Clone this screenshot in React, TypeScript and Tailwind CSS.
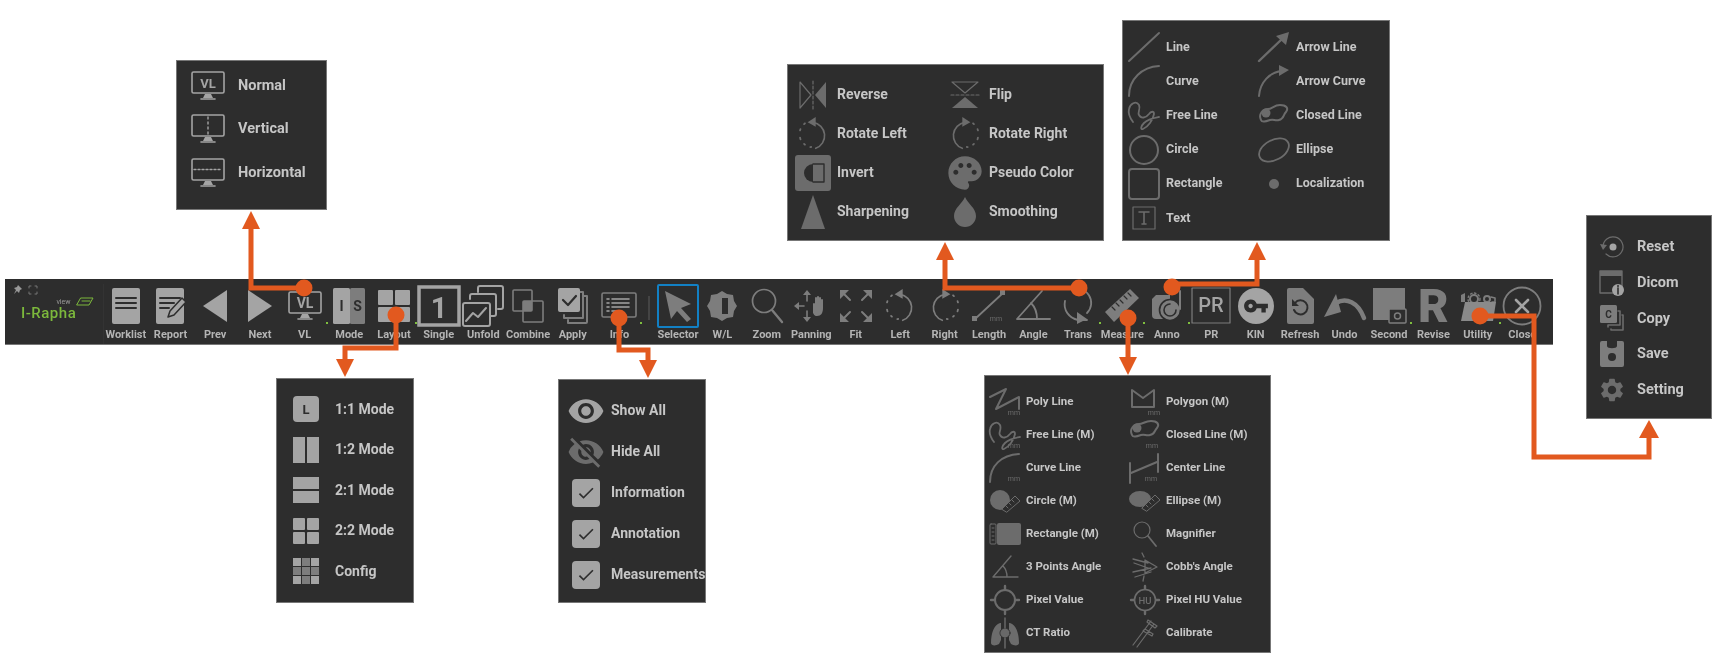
import React from 'react';
import { MdVisibility, MdVisibilityOff, MdPalette, MdSettings, MdVpnKey, MdCheck } from 'react-icons/md';

const L = '#a4a4a4';
const M = '#7d7d7d';
const D = '#6c6c6c';
const BG = '#2d2d2d';
const FONT = 'Roboto, sans-serif';

const Svg: React.FC<{ w: number; h: number; children: React.ReactNode }> = ({ w, h, children }) => (
  <svg width={w} height={h} viewBox={`0 0 ${w} ${h}`} fill="none" strokeLinecap="round" strokeLinejoin="round" className="overflow-visible">
    {children}
  </svg>
);

const Label: React.FC<{ x: number; y: number; s: number; c: string; w?: number; children: React.ReactNode }> = ({ x, y, s, c, w = 700, children }) => (
  <text x={x} y={y} fontSize={s} fill={c} fontWeight={w} fontFamily={FONT} textAnchor="middle">{children}</text>
);

const Mm: React.FC<{ x: number; y: number }> = ({ x, y }) => <Label x={x} y={y - 2} s={7} c={D} w={400}>mm</Label>;

/* ---- toolbar icons ---- */
const Pin = () => (
  <Svg w={10} h={10}><path d="M5 0l4 4-2 1-1 3-2-2-3 3 2-4-2-2 3-1z" fill="#999" /></Svg>
);
const Corners = () => (
  <Svg w={10} h={10}><path d="M1 3V1h2M7 1h2v2M9 7v2H7M3 9H1V7" stroke="#777" strokeWidth={1} /></Svg>
);
const Worklist = () => (
  <Svg w={30} h={36}>
    <rect x={1} y={0} width={28} height={36} rx={2} fill={L} />
    <path d="M5 10h20M5 15h20M5 20h20" stroke={BG} strokeWidth={2} />
  </Svg>
);
const Report = () => (
  <Svg w={32} h={36}>
    <rect x={1} y={0} width={28} height={36} rx={2} fill={L} />
    <path d="M5 10h20M5 15h14M5 20h9" stroke={BG} strokeWidth={2} />
    <path d="M13 29l2-6 12-13 4 4-12 13z" fill={L} stroke={BG} strokeWidth={1.5} />
  </Svg>
);
const Prev = () => <Svg w={24} h={32}><path d="M24 0v32L0 16z" fill={L} /></Svg>;
const Next = () => <Svg w={24} h={32}><path d="M0 0v32l24-16z" fill={L} /></Svg>;
const Monitor: React.FC<{ children?: React.ReactNode; c?: string }> = ({ children, c = L }) => (
  <Svg w={34} h={30}>
    <rect x={1} y={1} width={32} height={21} rx={1.5} stroke={c} strokeWidth={1.6} />
    <path d="M12 27l2-4h6l2 4z" fill={c} />
    <path d="M10 28h14" stroke={c} strokeWidth={1.6} />
    {children}
  </Svg>
);
const VL = () => <Monitor><Label x={17} y={17} s={14} c={L}>VL</Label></Monitor>;
const Mode = () => (
  <Svg w={32} h={36}>
    <rect x={0} y={0} width={17} height={36} rx={1.5} fill={L} />
    <rect x={17} y={0} width={15} height={36} rx={1.5} fill={M} />
    <Label x={8.5} y={23} s={14} c={BG}>I</Label>
    <Label x={24.5} y={23} s={14} c={BG}>S</Label>
  </Svg>
);
const Quad: React.FC<{ s: number }> = ({ s }) => {
  const h = (s - 2) / 2;
  return (
    <Svg w={s} h={s}>
      <rect x={0} y={0} width={h} height={h} rx={1} fill={L} />
      <rect x={h + 2} y={0} width={h} height={h} rx={1} fill={L} />
      <rect x={0} y={h + 2} width={h} height={h} rx={1} fill={L} />
      <rect x={h + 2} y={h + 2} width={h} height={h} rx={1} fill={L} />
    </Svg>
  );
};
const Single = () => (
  <Svg w={44} h={42}>
    <rect x={2} y={2} width={40} height={38} stroke={L} strokeWidth={3.5} strokeLinejoin="miter" />
    <Label x={22} y={33} s={29} c={L}>1</Label>
  </Svg>
);
const Unfold = () => (
  <Svg w={42} h={42}>
    <path d="M16 7V3a2 2 0 012-2h21a2 2 0 012 2v19a2 2 0 01-2 2h-3" stroke={L} strokeWidth={2} />
    <path d="M8 14v-3a2 2 0 012-2h22a2 2 0 012 2v18a2 2 0 01-2 2h-3" stroke={L} strokeWidth={2} />
    <rect x={1} y={18} width={27} height={23} rx={2} fill={BG} stroke={L} strokeWidth={2} />
    <path d="M4 36l7-8 5 4 8-9" stroke={L} strokeWidth={2} />
  </Svg>
);
const Combine = () => (
  <Svg w={32} h={34}>
    <rect x={1} y={1} width={19} height={21} rx={1} stroke={M} strokeWidth={1.6} />
    <rect x={11} y={12} width={20} height={21} rx={1} stroke={M} strokeWidth={1.6} />
    <rect x={11} y={12} width={9} height={10} fill={M} />
  </Svg>
);
const Apply = () => (
  <Svg w={30} h={36}>
    <path d="M26 8h3v26a1 1 0 01-1 1H10v-3" stroke={M} strokeWidth={2} />
    <path d="M22 4h3v26H6v-3" stroke={M} strokeWidth={2} />
    <rect x={0} y={0} width={22} height={24} rx={2} fill={L} />
    <path d="M5 12l5 5 8-9" stroke={BG} strokeWidth={2.2} />
  </Svg>
);
const Info = () => (
  <Svg w={36} h={28}>
    <rect x={1} y={1} width={34} height={24} rx={1.5} stroke={M} strokeWidth={1.6} />
    <path d="M6 7h2M6 11h2M6 15h2M6 19h2M11 7h17M11 11h17M11 15h17M11 19h8" stroke={L} strokeWidth={1.6} />
  </Svg>
);
const Selector = () => (
  <Svg w={30} h={32}><path d="M2 1l26 13-10 4 10 11-4 3-10-11-6 8z" fill={M} /></Svg>
);
const WL = () => (
  <Svg w={32} h={32}>
    <path d="M16 1l5 3 6 1 1 6 3 5-3 5-1 6-6 1-5 3-5-3-6-1-1-6-3-5 3-5 1-6 6-1z" fill={M} />
    <path d="M16 8h6v16h-6z" fill={BG} />
  </Svg>
);
const Zoom = () => (
  <Svg w={32} h={36}>
    <circle cx={13} cy={13} r={11.5} stroke={M} strokeWidth={1.7} />
    <path d="M21 22l10 12" stroke={M} strokeWidth={2.4} />
  </Svg>
);
const Panning = () => (
  <Svg w={36} h={34}>
    <path d="M14 1l4 5h-8zM14 33l-4-5h8zM1 17l5-4v8z" fill={M} />
    <path d="M14 6v6M14 22v6M6 17h5" stroke={M} strokeWidth={1.6} />
    <path d="M20 24v-9a1 1 0 012 0v-6a1 1 0 012 0v-1a1 1 0 012 0v1a1 1 0 012 0v2a1 1 0 012 0v8c0 5-2 8-6 8-3 0-3-2-4-3z" fill={M} />
  </Svg>
);
const Fit = () => (
  <Svg w={34} h={34}>
    <path d="M1 1h9L1 10zM33 1v9L24 1zM1 33v-9l9 9zM33 33h-9l9-9z" fill={M} />
    <path d="M5 5l6 6M29 5l-6 6M5 29l6-6M29 29l-6-6" stroke={M} strokeWidth={2} />
  </Svg>
);
const RotL: React.FC<{ c?: string; s?: number }> = ({ c = M, s = 34 }) => (
  <svg width={s} height={s} viewBox="0 0 34 38" fill="none" strokeLinecap="round">
    <path d="M17 6a15 15 0 0 1 3 29" stroke={c} strokeWidth={1.8} />
    <path d="M15 33.5l-1 .1M8 31l-1-1M3 25l-.5-2M2.500 15l.5-1.500M7 8l1-1" stroke={c} strokeWidth={2} />
    <path d="M20 0v11l-9-5z" fill={c} />
  </svg>
);
const RotR: React.FC<{ c?: string; s?: number }> = ({ c = M, s = 34 }) => (
  <div className="-scale-x-100"><RotL c={c} s={s} /></div>
);
const Length = () => (
  <Svg w={36} h={34}>
    <path d="M4 30L32 4" stroke={M} strokeWidth={1.8} />
    <rect x={1} y={27} width={5} height={5} fill={M} />
    <rect x={29} y={1} width={5} height={5} fill={M} />
    <Label x={25} y={32} s={7} c={D} w={400}>mm</Label>
  </Svg>
);
const Angle = () => (
  <Svg w={36} h={32}>
    <path d="M27 1L2 29h33M16 13c4 4 6 9 6 16" stroke={M} strokeWidth={1.8} />
  </Svg>
);
const Trans = () => (
  <Svg w={30} h={36}>
    <path d="M9 2a14 14 0 0115 23M24 32H15C6 30 0 22 2 13" stroke={M} strokeWidth={1.8} />
    <path d="M14 24v12l10-5z" fill={M} />
  </Svg>
);
const Ruler = () => (
  <Svg w={36} h={36}>
    <path d="M1 24L26 1l9 9-25 24z" fill={M} />
    <path d="M8 19l3 3M12 15l3 3M16 12l3 3M20 8l3 3M24 5l3 3" stroke={BG} strokeWidth={1.2} />
  </Svg>
);
const Anno = () => (
  <Svg w={32} h={32}>
    <path d="M1 9l4-4h14v24H5a4 4 0 01-4-4z" fill={M} />
    <circle cx={19} cy={20} r={10.500} fill={M} stroke={BG} strokeWidth={1.6} />
    <path d="M19 14a6 6 0 106 6" stroke={BG} strokeWidth={1.6} />
    <path d="M29 19V1" stroke={M} strokeWidth={2} />
  </Svg>
);
const PR = () => (
  <Svg w={40} h={36}>
    <rect x={1} y={0} width={38} height={35} stroke={M} strokeWidth={1.2} />
    <Label x={20} y={24} s={20} c={L} w={500}>PR</Label>
  </Svg>
);
const Kin = () => (
  <div className="relative flex h-[36px] w-[36px] items-center justify-center rounded-full bg-[#a4a4a4]">
    <MdVpnKey size={26} color={BG} />
  </div>
);
const Refresh = () => (
  <Svg w={28} h={36}>
    <path d="M1 2a2 2 0 012-2h14l11 11v23a2 2 0 01-2 2H3a2 2 0 01-2-2z" fill={M} />
    <path d="M9 15a7 7 0 11-1 7" stroke={BG} strokeWidth={2} />
    <path d="M6 11v7h7z" fill={BG} />
  </Svg>
);
const Undo = () => (
  <Svg w={42} h={28}>
    <path d="M40 26C34 10 22 5 12 11" stroke={M} strokeWidth={4.5} />
    <path d="M12 2l5 18L0 25z" fill={M} />
  </Svg>
);
const Second = () => (
  <Svg w={34} h={36}>
    <rect x={1} y={0} width={32} height={32} fill={M} />
    <rect x={17} y={21} width={17} height={14} rx={1} fill={BG} stroke={M} strokeWidth={1.5} />
    <circle cx={25.500} cy={28} r={3} stroke={M} strokeWidth={1.5} />
  </Svg>
);
const Revise = () => (
  <div className="h-[36px] text-[47px] font-black leading-[36px] text-[#7d7d7d]">R</div>
);
const Utility = () => (
  <Svg w={36} h={30}>
    <path d="M1 4l4-2v9H1z" fill={M} />
    <circle cx={14} cy={8} r={4} stroke={M} strokeWidth={2} />
    <circle cx={14} cy={8} r={6} stroke={M} strokeWidth={1.4} strokeDasharray="1.500 2.500" />
    <circle cx={27} cy={8} r={3} stroke={M} strokeWidth={2} />
    <path d="M31 6l4 1v4h-3" stroke={M} strokeWidth={1.6} />
    <path d="M5 11h31l-3 19H1z" fill="#8a8a8a" />
  </Svg>
);
const Close = () => (
  <Svg w={40} h={40}>
    <circle cx={20} cy={20} r={18.500} stroke={M} strokeWidth={1.8} />
    <path d="M14 14l12 12M26 14L14 26" stroke={L} strokeWidth={2.6} />
  </Svg>
);

/* ---- menu icons ---- */
const VLNormal = () => <Monitor><Label x={17} y={17} s={13} c={L}>VL</Label></Monitor>;
const VLVertical = () => <Monitor><path d="M17 3v17" stroke={L} strokeWidth={1.4} strokeDasharray="2 3" /></Monitor>;
const VLHorizontal = () => <Monitor><path d="M3 11.500h28" stroke={L} strokeWidth={1.4} strokeDasharray="2 2" /></Monitor>;

const LayoutL = () => (
  <div className="flex h-[26px] w-[26px] items-center justify-center rounded-sm bg-[#a4a4a4] text-[13px] font-bold text-[#2d2d2d]">L</div>
);
const Layout12 = () => (
  <Svg w={26} h={26}><rect width={12} height={26} fill={L} /><rect x={14} width={12} height={26} fill={L} /></Svg>
);
const Layout21 = () => (
  <Svg w={26} h={26}><rect width={26} height={12} fill={L} /><rect y={14} width={26} height={12} fill={L} /></Svg>
);
const LayoutCfg = () => (
  <Svg w={26} h={26}>
    {[0, 9, 18].map(x => [0, 9, 18].map(y => <rect key={`${x}-${y}`} x={x} y={y} width={8} height={8} fill={x === 9 || y === 9 ? M : L} />))}
  </Svg>
);
const Check = () => (
  <div className="flex h-[28px] w-[28px] items-center justify-center rounded-sm bg-[#a4a4a4]">
    <MdCheck size={20} color={BG} />
  </div>
);

const Reverse = () => (
  <Svg w={28} h={28}>
    <path d="M1 1l11 13L1 27z" stroke={D} strokeWidth={1.2} />
    <path d="M27 1L16 14l11 13z" fill={D} />
    <path d="M14 0v28" stroke={D} strokeWidth={1.2} strokeDasharray="3 2" />
  </Svg>
);
const Flip = () => (
  <div className="rotate-90"><Reverse /></div>
);
const Invert = () => (
  <Svg w={36} h={36}>
    <rect x={0} y={0} width={36} height={36} rx={3} fill={D} />
    <path d="M18 9a9 9 0 000 18z" fill={BG} />
    <path d="M18 9h11v18H18" stroke={BG} strokeWidth={1.4} />
  </Svg>
);
const Sharpen = () => <Svg w={24} h={34}><path d="M12 0l12 34H0z" fill={D} /></Svg>;
const Drop = () => <Svg w={24} h={30}><path d="M12 0c3 7 11 11 11 19a11 11 0 01-22 0C1 11 9 7 12 0z" fill={D} /></Svg>;

const LineI = () => <Svg w={32} h={30}><path d="M1 29L31 1" stroke={D} strokeWidth={2} /></Svg>;
const ArrowLine = () => (
  <Svg w={32} h={30}><path d="M1 29L24 7" stroke={D} strokeWidth={2.4} /><path d="M31 0l-3 13-10-9z" fill={D} /></Svg>
);
const Curve = () => <Svg w={32} h={32}><path d="M1 31C1 14 14 2 31 1" stroke={D} strokeWidth={2} /></Svg>;
const ArrowCurve = () => (
  <Svg w={32} h={32}><path d="M1 31C2 17 12 7 24 6" stroke={D} strokeWidth={2} /><path d="M31 5L21 11V0z" fill={D} /></Svg>
);
const SQUIGGLE = 'M5 22C2 18 0 13 1 9 2 4 8 0 11 5 13 9 9 13 11 15 13 19 18 18 21 14 23 11 26 11 26 14 25 20 20 27 15 29 12 30 13 26 16 23 20 19 26 18 31 17';
const FreeLine = () => (
  <Svg w={32} h={30}><path d={SQUIGGLE} stroke={D} strokeWidth={1.8} /></Svg>
);
const ClosedLine = () => (
  <Svg w={32} h={24}>
    <path d="M3 17C0 11 5 6 10 6c4 0 6-4 12-4 6 0 9 3 6 7-3 3-2 7-7 8-4 1-5-1-9 0-3 1-8 3-9 0z" stroke={D} strokeWidth={2} />
    <circle cx={8} cy={10} r={4.500} fill={D} />
  </Svg>
);
const CircleI = () => <Svg w={30} h={30}><circle cx={15} cy={15} r={14} stroke={D} strokeWidth={2} /></Svg>;
const EllipseI = () => <Svg w={32} h={28}><ellipse cx={16} cy={14} rx={16} ry={10} transform="rotate(-28 16 14)" stroke={D} strokeWidth={1.8} /></Svg>;
const RectI = () => <Svg w={32} h={32}><rect x={1} y={1} width={30} height={30} rx={3} stroke={D} strokeWidth={2} /></Svg>;
const Dot = () => <Svg w={12} h={12}><circle cx={6} cy={6} r={5} fill={D} /></Svg>;
const TextI = () => (
  <Svg w={24} h={24}>
    <rect x={1} y={1} width={22} height={22} stroke={D} strokeWidth={1.2} />
    <path d="M7 6h10M12 6v12M10 18h4" stroke={D} strokeWidth={1.6} />
  </Svg>
);

const PolyLine = () => (
  <Svg w={32} h={30}>
    <path d="M1 10L17 2 7 22l23-12v12" stroke={D} strokeWidth={2} />
    <Mm x={25} y={30} />
  </Svg>
);
const Polygon = () => (
  <Svg w={32} h={30}>
    <path d="M3 3l11 8L25 3v17H3z" stroke={D} strokeWidth={2} />
    <Mm x={25} y={30} />
  </Svg>
);
const FreeLineM = () => (
  <Svg w={32} h={30}>
    <path d={SQUIGGLE} stroke={D} strokeWidth={1.8} />
    <Mm x={25} y={30} />
  </Svg>
);
const ClosedM = () => (
  <Svg w={32} h={30}>
    <path d="M3 15C0 9 5 4 10 4c4 0 6-3 12-3 6 0 9 3 6 7-3 3-2 6-7 7-4 1-5-1-9 0-3 1-8 3-9 0z" stroke={D} strokeWidth={2} />
    <circle cx={8} cy={8} r={4.500} fill={D} />
    <Mm x={23} y={30} />
  </Svg>
);
const CurveM = () => (
  <Svg w={32} h={30}>
    <path d="M1 29C1 13 12 2 30 1" stroke={D} strokeWidth={2} />
    <Mm x={25} y={30} />
  </Svg>
);
const CenterLine = () => (
  <Svg w={32} h={30}>
    <path d="M1 10v20M29 1v18M2 20L28 9" stroke={D} strokeWidth={2} />
    <Mm x={22} y={30} />
  </Svg>
);
const CircleM = () => (
  <Svg w={32} h={24}>
    <circle cx={11} cy={11} r={10} fill={D} />
    <path d="M13 20L26 7l5 5-13 11z" fill={BG} stroke={D} strokeWidth={1} />
    <path d="M17 17l2 2M20 14l2 2M23 11l2 2" stroke={D} strokeWidth={1} />
  </Svg>
);
const EllipseM = () => (
  <Svg w={32} h={22}>
    <ellipse cx={11} cy={9} rx={11} ry={8} fill={D} />
    <path d="M13 18L26 5l5 5-13 11z" fill={BG} stroke={D} strokeWidth={1} />
    <path d="M17 15l2 2M20 12l2 2M23 9l2 2" stroke={D} strokeWidth={1} />
  </Svg>
);
const RectM = () => (
  <Svg w={32} h={22}>
    <rect x={8} y={0} width={24} height={22} rx={2} fill={D} />
    <rect x={1} y={1} width={6} height={20} rx={1} stroke={D} strokeWidth={1} />
    <path d="M3 5h2M3 9h2M3 13h2M3 17h2" stroke={D} strokeWidth={1} />
  </Svg>
);
const Magnifier = () => (
  <Svg w={24} h={26}><circle cx={9} cy={9} r={8} stroke={D} strokeWidth={1.2} /><path d="M15 15l8 10" stroke={D} strokeWidth={1.8} /></Svg>
);
const Angle3 = () => (
  <Svg w={28} h={24}><path d="M20 1L2 22h25M12 11c3 3 4 6 4 11" stroke={D} strokeWidth={1.4} /></Svg>
);
const Cobb = () => (
  <Svg w={28} h={30}>
    <path d="M2 7l15 4M3 11l14 5M2 20l18-4M4 25l16-5M11 1l2 4M13 24l-1 5M14 8l12 7-12 6z" stroke={D} strokeWidth={1.3} />
  </Svg>
);
const PixelV = () => (
  <Svg w={30} h={30}>
    <circle cx={15} cy={15} r={10} stroke={D} strokeWidth={2} />
    <path d="M15 1v4M15 25v4M1 15h4M25 15h4" stroke={D} strokeWidth={2.4} />
  </Svg>
);
const PixelHU = () => (
  <Svg w={30} h={30}>
    <circle cx={15} cy={15} r={10.500} stroke={D} strokeWidth={1.6} />
    <path d="M15 1v3M15 26v3M1 15h3M26 15h3" stroke={D} strokeWidth={2.4} />
    <Label x={15} y={18.500} s={9.500} c={D} w={500}>HU</Label>
  </Svg>
);
const CtRatio = () => (
  <Svg w={30} h={30}>
    <path d="M10 5C4 7 1 15 1 25c0 3 5 3 8 1l2-4V5zM20 5c6 2 9 10 9 20 0 3-5 3-8 1l-2-4V5z" fill={D} />
    <circle cx={15} cy={15} r={5} fill={L} fillOpacity={0.5} stroke={BG} />
    <path d="M15 0v10M15 20v10" stroke={D} strokeWidth={1.4} />
  </Svg>
);
const Calibrate = () => (
  <Svg w={26} h={30}>
    <path d="M1 27L19 3M5 29L22 6M16 2l9 6-2 2-8-6zM13 11l8 5-1 2-9-5z" stroke={D} strokeWidth={1.2} />
  </Svg>
);

const ResetI = () => (
  <Svg w={24} h={22}>
    <path d="M3 11a10 10 0 1 1 3 7" stroke={D} strokeWidth={1.2} />
    <path d="M0 8l7 1-4 5z" fill={D} />
    <circle cx={13} cy={11} r={3.500} fill={L} />
  </Svg>
);
const DicomI = () => (
  <Svg w={26} h={26}>
    <rect x={1} y={1} width={22} height={22} stroke={D} strokeWidth={1.4} />
    <rect x={1} y={1} width={22} height={5} fill={D} />
    <circle cx={19} cy={20} r={6} fill={L} />
    <path d="M19 18v6M19 15.500v1" stroke={BG} strokeWidth={1.6} />
  </Svg>
);
const CopyI = () => (
  <Svg w={24} h={26}>
    <path d="M18 6h2v14H8v2M22 10h1v15H11v-1" stroke={D} strokeWidth={1.6} />
    <rect x={0} y={0} width={17} height={18} rx={1.5} fill={M} />
    <Label x={8.500} y={13} s={10} c={BG}>C</Label>
  </Svg>
);
const SaveI = () => (
  <Svg w={24} h={26}>
    <path d="M2 0h5v5c0 3 10 3 10 0V0h5a2 2 0 012 2v22a2 2 0 01-2 2H2a2 2 0 01-2-2V2a2 2 0 012-2z" fill={M} />
    <circle cx={12} cy={16} r={4} fill={BG} />
  </Svg>
);

/* ---- data ---- */
const tools: { label: string; icon: React.ReactNode; mark?: boolean }[] = [
  { label: 'Worklist', icon: <Worklist /> },
  { label: 'Report', icon: <Report /> },
  { label: 'Prev', icon: <Prev /> },
  { label: 'Next', icon: <Next /> },
  { label: 'VL', icon: <VL />, mark: true },
  { label: 'Mode', icon: <Mode /> },
  { label: 'Layout', icon: <Quad s={32} />, mark: true },
  { label: 'Single', icon: <Single /> },
  { label: 'Unfold', icon: <Unfold /> },
  { label: 'Combine', icon: <Combine /> },
  { label: 'Apply', icon: <Apply /> },
];
const tools2: typeof tools = [
  { label: 'Selector', icon: <Selector /> },
  { label: 'W/L', icon: <WL /> },
  { label: 'Zoom', icon: <Zoom /> },
  { label: 'Panning', icon: <Panning /> },
  { label: 'Fit', icon: <Fit /> },
  { label: 'Left', icon: <RotL /> },
  { label: 'Right', icon: <RotR /> },
  { label: 'Length', icon: <Length /> },
  { label: 'Angle', icon: <Angle /> },
  { label: 'Trans', icon: <Trans />, mark: true },
  { label: 'Measure', icon: <Ruler />, mark: true },
  { label: 'Anno', icon: <Anno />, mark: true },
  { label: 'PR', icon: <PR /> },
  { label: 'KIN', icon: <Kin /> },
  { label: 'Refresh', icon: <Refresh /> },
  { label: 'Undo', icon: <Undo /> },
  { label: 'Second', icon: <Second />, mark: true },
  { label: 'Revise', icon: <Revise /> },
  { label: 'Utility', icon: <Utility />, mark: true },
  { label: 'Close', icon: <Close /> },
];

const Tool: React.FC<{ label: string; icon: React.ReactNode; mark?: boolean; selected?: boolean; narrow?: boolean }> = ({ label, icon, mark, selected, narrow }) => (
  <div className={`flex shrink-0 flex-col items-center ${narrow ? 'w-[44.45px]' : 'w-[44.7px]'}`}>
    <div className={`relative flex h-[44px] w-[42px] items-center justify-center ${selected ? 'rounded-[2px] border-2 border-[#1280c4]' : ''}`}>
      {icon}
      {mark && <span className="absolute bottom-[4px] right-[-2px] h-[2px] w-[2px] bg-[#7fbf3f]" />}
    </div>
    <span className="whitespace-nowrap text-[11px] font-bold leading-[13px] text-[#b4b4b4]">{label}</span>
  </div>
);

const Row: React.FC<{ icon: React.ReactNode; label: string; box: string; text: string }> = ({ icon, label, box, text }) => (
  <div className="flex h-full items-center">
    <div className={`flex shrink-0 items-center justify-center ${box}`}>{icon}</div>
    <span className={`whitespace-nowrap font-bold text-[#c6c6c6] ${text}`}>{label}</span>
  </div>
);

const panel = 'absolute border border-[#777] bg-[#2d2d2d]';

export default function App() {
  return (
    <div className="relative h-[660px] w-[1718px] overflow-hidden bg-white blur-[0.5px] [font-family:Roboto,sans-serif]">
      {/* VL */}
      <div className={`${panel} left-[176px] top-[60px] flex h-[150px] w-[151px] flex-col pt-[3px]`}>
        {[['Normal', <VLNormal />], ['Vertical', <VLVertical />], ['Horizontal', <VLHorizontal />]].map(([t, i]) => (
          <div key={t as string} className="h-[43.5px]">
            <Row icon={i} label={t as string} box="ml-[14px] mr-[13px] w-[34px]" text="text-[14.5px]" />
          </div>
        ))}
      </div>

      {/* Layout */}
      <div className={`${panel} left-[276px] top-[378px] flex h-[225px] w-[138px] flex-col pt-[10px]`}>
        {[['1:1 Mode', <LayoutL />], ['1:2 Mode', <Layout12 />], ['2:1 Mode', <Layout21 />], ['2:2 Mode', <Quad s={26} />], ['Config', <LayoutCfg />]].map(([t, i]) => (
          <div key={t as string} className="h-[40.5px]">
            <Row icon={i} label={t as string} box="ml-[15px] mr-[15px] w-[28px]" text="text-[14px]" />
          </div>
        ))}
      </div>

      {/* Info */}
      <div className={`${panel} left-[558px] top-[379px] flex h-[224px] w-[148px] flex-col pt-[10px]`}>
        {[['Show All', <MdVisibility size={38} color={L} />], ['Hide All', <MdVisibilityOff size={38} color={D} />], ['Information', <Check />], ['Annotation', <Check />], ['Measurements', <Check />]].map(([t, i]) => (
          <div key={t as string} className="h-[41px]">
            <Row icon={i} label={t as string} box="ml-[8px] mr-[6px] w-[38px]" text="text-[14px]" />
          </div>
        ))}
      </div>

      {/* Trans */}
      <div className={`${panel} left-[787px] top-[64px] grid h-[177px] w-[317px] grid-cols-[152px_1fr] auto-rows-[39px] pt-[10px]`}>
        {[
          ['Reverse', <Reverse />], ['Flip', <Flip />],
          ['Rotate Left', <RotL c={D} />], ['Rotate Right', <RotR c={D} />],
          ['Invert', <Invert />], ['Pseudo Color', <MdPalette size={42} color={D} />],
          ['Sharpening', <Sharpen />], ['Smoothing', <Drop />],
        ].map(([t, i]) => (
          <Row key={t as string} icon={i} label={t as string} box="ml-[5px] mr-[4px] w-[40px]" text="text-[14px]" />
        ))}
      </div>

      {/* Anno */}
      <div className={`${panel} left-[1122px] top-[20px] grid h-[221px] w-[268px] grid-cols-[130px_1fr] auto-rows-[34.2px] pt-[9px]`}>
        {[
          ['Line', <LineI />], ['Arrow Line', <ArrowLine />],
          ['Curve', <Curve />], ['Arrow Curve', <ArrowCurve />],
          ['Free Line', <FreeLine />], ['Closed Line', <ClosedLine />],
          ['Circle', <CircleI />], ['Ellipse', <EllipseI />],
          ['Rectangle', <RectI />], ['Localization', <Dot />],
          ['Text', <TextI />],
        ].map(([t, i]) => (
          <Row key={t as string} icon={i} label={t as string} box="ml-[4px] mr-[5px] w-[34px]" text="text-[12.5px]" />
        ))}
      </div>

      {/* Measure */}
      <div className={`${panel} left-[984px] top-[375px] grid h-[278px] w-[287px] grid-cols-[140px_1fr] auto-rows-[33px] pt-[9px]`}>
        {[
          ['Poly Line', <PolyLine />], ['Polygon (M)', <Polygon />],
          ['Free Line (M)', <FreeLineM />], ['Closed Line (M)', <ClosedM />],
          ['Curve Line', <CurveM />], ['Center Line', <CenterLine />],
          ['Circle (M)', <CircleM />], ['Ellipse (M)', <EllipseM />],
          ['Rectangle (M)', <RectM />], ['Magnifier', <Magnifier />],
          ['3 Points Angle', <Angle3 />], ["Cobb's Angle", <Cobb />],
          ['Pixel Value', <PixelV />], ['Pixel HU Value', <PixelHU />],
          ['CT Ratio', <CtRatio />], ['Calibrate', <Calibrate />],
        ].map(([t, i]) => (
          <Row key={t as string} icon={i} label={t as string} box="ml-[4px] mr-[5px] w-[32px]" text="text-[11.5px]" />
        ))}
      </div>

      {/* Utility */}
      <div className={`${panel} left-[1586px] top-[215px] flex h-[204px] w-[126px] flex-col pt-[13px]`}>
        {[['Reset', <ResetI />], ['Dicom', <DicomI />], ['Copy', <CopyI />], ['Save', <SaveI />], ['Setting', <MdSettings size={28} color={D} />]].map(([t, i]) => (
          <div key={t as string} className="h-[35.800px]">
            <Row icon={i} label={t as string} box="ml-[11px] mr-[11px] w-[28px]" text="text-[14.5px]" />
          </div>
        ))}
      </div>

      {/* toolbar */}
      <div className="absolute left-[5px] top-[279px] flex h-[66px] w-[1548px] items-start border-b border-[#777] bg-[#2d2d2d] pt-[5px]">
        <div className="relative h-full w-[98.500px] shrink-0 border-r border-[#333]">
          <div className="flex gap-[5px] pl-[8px] pt-[1px]"><Pin /><Corners /></div>
          <div className="mt-[2px] flex items-center justify-end gap-[5px] pr-[9px]">
            <span className="text-[7px] leading-[8px] text-[#999]">view</span>
            <Svg w={18} h={9}><path d="M5 1h12L13 8H1z" stroke="#7cb83c" strokeWidth={1} /><path d="M6 4h8" stroke="#7cb83c" strokeWidth={1} /></Svg>
          </div>
          <div className="pl-[16px] text-[15px] font-medium leading-[14px] tracking-[0.5px] text-[#7cb83c]">I-Rapha</div>
        </div>
        {tools.map(t => <Tool key={t.label} {...t} />)}
        <div className="ml-[2px]"><Tool label="Info" icon={<Info />} mark /></div>
        <div className="ml-[6px] mr-[6px] mt-[12px] h-[24px] w-[2px] bg-[#444]" />
        <Tool {...tools2[0]} selected narrow />
        {tools2.slice(1).map(t => <Tool key={t.label} {...t} narrow />)}
      </div>

      {/* callouts */}
      <svg className="pointer-events-none absolute inset-0" width={1718} height={660} fill="none">
        <g stroke="#e2591f" strokeWidth={5}>
          <path d="M304 288H251V226" />
          <path d="M396 315V348H345V362" />
          <path d="M619 318V350H648V362" />
          <path d="M1079 288H945V258" />
          <path d="M1172 284H1257V258" />
          <path d="M1128 318V360" />
          <path d="M1480 316H1534V457H1649V436" />
        </g>
        <g fill="#e2591f">
          <circle cx={304} cy={288} r={8.500} />
          <circle cx={396} cy={315} r={8.500} />
          <circle cx={619} cy={318} r={8.500} />
          <circle cx={1079} cy={288} r={8.500} />
          <circle cx={1172} cy={287} r={8.500} />
          <circle cx={1128} cy={318} r={8.500} />
          <circle cx={1480} cy={316} r={8.500} />
          <path d="M251 211l9 18h-18z" />
          <path d="M345 377l-9-18h18z" />
          <path d="M648 378l-9-18h18z" />
          <path d="M945 242l9 18h-18z" />
          <path d="M1257 242l9 18h-18z" />
          <path d="M1128 375l-9-18h18z" />
          <path d="M1649 420l10 18h-20z" />
        </g>
      </svg>
    </div>
  );
}
